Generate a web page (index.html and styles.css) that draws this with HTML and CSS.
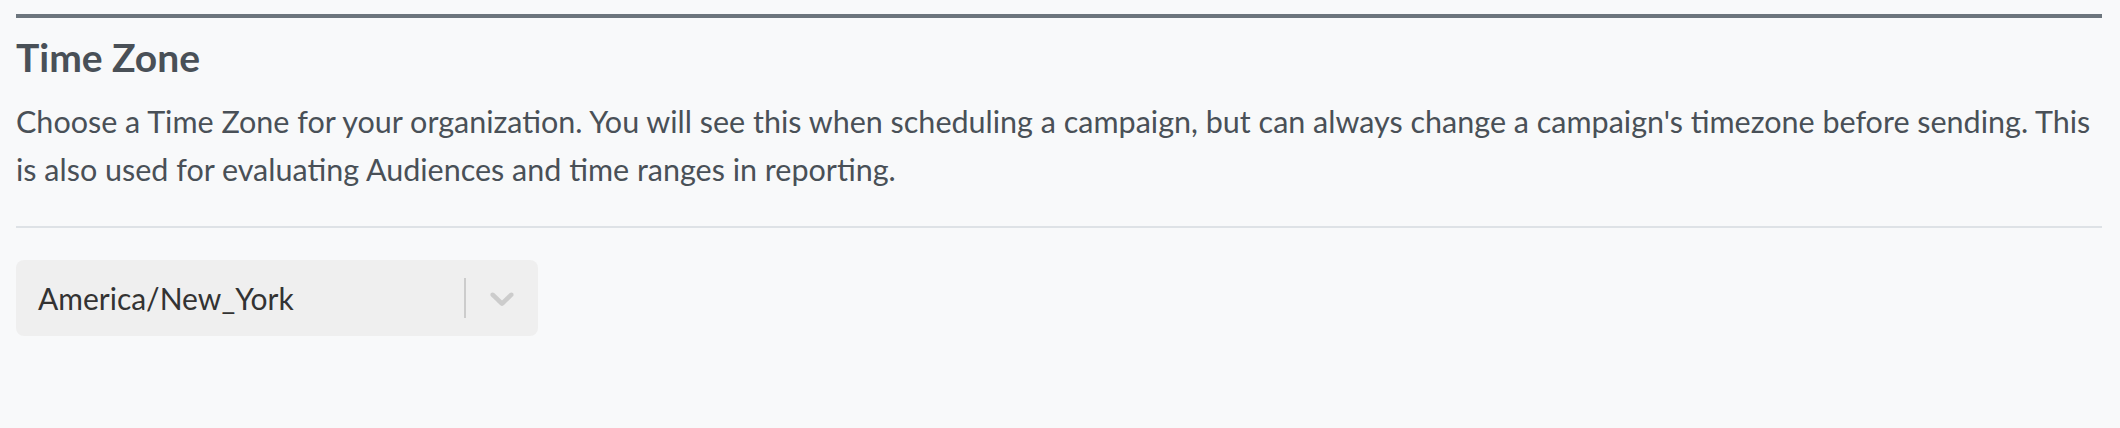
FILE: index.html
```html
<!DOCTYPE html>
<html lang="en">
<head>
<meta charset="utf-8">
<title>Time Zone</title>
<link rel="stylesheet" href="styles.css">
</head>
<body>
<div class="page">
  <section class="setting">
    <h2 class="setting-title">Time Zone</h2>
    <p class="setting-desc">Choose a Time Zone for your organization. You will see this when scheduling a campaign, but can always change a campaign's timezone before sending. This is also used for evaluating Audiences and time ranges in reporting.</p>
    <hr class="setting-divider">
    <div class="select">
      <div class="select-value">America/New_York</div>
      <div class="select-indicators">
        <span class="select-separator"></span>
        <span class="select-dropdown">
          <svg width="40" height="40" viewBox="0 0 20 20" aria-hidden="true"><path d="M4.516 7.548c0.436-0.446 1.043-0.481 1.576 0l3.908 3.747 3.908-3.747c0.533-0.481 1.141-0.446 1.574 0 0.436 0.445 0.408 1.197 0 1.615-0.406 0.418-4.695 4.502-4.695 4.502-0.217 0.223-0.502 0.335-0.787 0.335s-0.57-0.112-0.789-0.335c0 0-4.287-4.084-4.695-4.502s-0.436-1.170 0-1.615z"/></svg>
        </span>
      </div>
    </div>
  </section>
</div>
</body>
</html>
```
FILE: styles.css
```css
html, body {
  margin: 0;
  padding: 0;
  background: #f8f9fa;
}
body {
  font-family: Lato, "Open Sans", sans-serif;
  color: #495057;
}
.page {
  padding: 14px 18px 0 16px;
}
.setting {
  border-top: 4px solid #6c757d;
}
.setting-title {
  margin: 15px 0 0;
  font-size: 39px;
  line-height: 48px;
  font-weight: 700;
  color: #495057;
}
.setting-desc {
  margin: 16px 0 0;
  padding-right: 4px;
  font-size: 30.5px;
  line-height: 48px;
}
.setting-divider {
  margin: 33px 0 0;
  border: 0;
  height: 2px;
  background: #dee2e6;
}
.select {
  margin-top: 32px;
  width: 522px;
  height: 76px;
  box-sizing: border-box;
  background: #efefef;
  border-radius: 8px;
  display: flex;
  align-items: center;
}
.select-value {
  flex: 1;
  padding-left: 22px;
  font-size: 30px;
  color: #333333;
}
.select-indicators {
  display: flex;
  align-items: center;
  align-self: stretch;
}
.select-separator {
  width: 2px;
  height: 40px;
  background: #cccccc;
}
.select-dropdown {
  display: flex;
  padding: 0 16px;
  fill: #cccccc;
}
```
